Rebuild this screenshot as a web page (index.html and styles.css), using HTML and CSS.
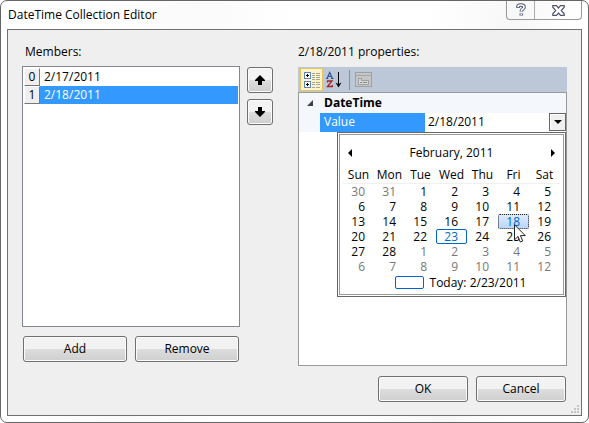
FILE: index.html
```html
<!DOCTYPE html>
<html lang="en">
<head>
<meta charset="utf-8">
<title>DateTime Collection Editor</title>
<link rel="stylesheet" href="styles.css">
</head>
<body>
<main class="dialog">
  <header class="titlebar">
    <h1 class="title">DateTime Collection Editor</h1>
    <div class="caption-buttons">
      <button class="caption help" aria-label="Help">
        <svg width="12" height="14" viewBox="0 0 12 14"><path d="M3 5V3.600C3 2.100 4.300 2 6 2s3 .4 3 1.900C9 6 6.300 6 6.300 8.600M6.300 10.500v2" fill="none" stroke="#51556b" stroke-width="3.600"/><path d="M3 4.200V3.600C3 2.100 4.300 2 6 2s3 .4 3 1.900C9 6 6.300 6 6.300 8M6.300 11v1" fill="none" stroke="#fff" stroke-width="1.600"/></svg>
      </button>
      <button class="caption close" aria-label="Close">
        <svg width="13" height="11" viewBox="0 0 13 11"><path d="M.8.700h3.700l2 2.300 2-2.300h3.700v1.500L9.300 5.500l2.900 3.300v1.500H8.500l-2-2.300-2 2.300H.8V8.800l2.900-3.300L.8 2.200z" fill="#fff" stroke="#51556b" stroke-width="1.200"/></svg>
      </button>
    </div>
  </header>
  <div class="client">
    <div class="panels">
      <section class="members">
        <h2 class="label">Members:</h2>
        <ul class="listbox" role="listbox" aria-label="Members">
          <li class="item" role="option" aria-selected="false"><span class="index">0</span><span class="name">2/17/2011</span></li>
          <li class="item selected" role="option" aria-selected="true"><span class="index">1</span><span class="name">2/18/2011</span></li>
        </ul>
        <div class="member-actions">
          <button class="button">Add</button>
          <button class="button">Remove</button>
        </div>
      </section>
      <div class="order">
        <button class="button" aria-label="Move up"><svg width="10" height="10" viewBox="0 0 10 10"><path d="M5 0l5 5v1H7v4H3V6H0V5z"/></svg></button>
        <button class="button" aria-label="Move down"><svg width="10" height="10" viewBox="0 0 10 10"><path d="M5 10l5-5V4H7V0H3v4H0v1z"/></svg></button>
      </div>
      <section class="properties">
        <h2 class="label">2/18/2011 properties:</h2>
        <div class="toolbar">
          <button class="tool active" aria-label="Categorized">
            <svg width="18" height="18" viewBox="0 0 18 18" shape-rendering="crispEdges"><g fill="#fff" stroke="#5f83b5"><rect x="1.500" y="1.500" width="6" height="6" rx="1"/><rect x="1.500" y="10.500" width="6" height="6" rx="1"/></g><path d="M3 4.500h3M4.500 3v3M3 13.500h3M4.500 12v3" stroke="#000"/><path d="M9 2.500h3M9 4.500h3M9 6.500h3M9 8.500h3M9 11.500h3M9 13.500h3M9 16.500h3M13 2.500h4M13 4.500h4M13 6.500h4M13 8.500h4M13 11.500h4M13 13.500h4M13 16.500h4" stroke="#a5a59c"/></svg>
          </button>
          <button class="tool" aria-label="Alphabetical">
            <svg width="18" height="18" viewBox="0 0 18 18"><path d="M1 7.500l2.700-6 2.700 6M2.200 5.500h3M0 7.500h2.300M5 7.500h2.500" fill="none" stroke="#2f5597" stroke-width="1.200"/><path d="M1.500 11.500v-1.500h4.500L1.500 15.500h4.800V14" fill="none" stroke="#a1262b" stroke-width="1.300"/><path d="M12.500 1v13" stroke="#000"/><path d="M9.500 11.500l3 5 3-5-3 1.500z"/></svg>
          </button>
          <span class="separator"></span>
          <button class="tool pages" disabled aria-label="Property pages">
            <svg width="17" height="16" viewBox="0 0 17 16" shape-rendering="crispEdges"><path d="M.5.500h16v14H.5z" fill="#c5c5c5" stroke="#a0a0a0"/><path d="M1 3.500h15" stroke="#a6a6a6"/><path d="M3.500 12.500v-6h3v2h7v4z" fill="#d8d8d8" stroke="#a0a0a0"/><path d="M5 10.500h2M8 10.500h4" stroke="#888"/></svg>
          </button>
        </div>
        <div class="grid">
          <div class="category"><svg class="expander" width="6" height="6" viewBox="0 0 6 6"><path d="M6 0v6H0z" fill="#404040"/></svg><strong>DateTime</strong></div>
          <div class="property">
            <label class="property-name" for="value">Value</label>
            <input class="property-value" id="value" type="text" value="2/18/2011">
            <button class="dropdown" aria-label="Open calendar"><svg width="8" height="4" viewBox="0 0 8 4"><path d="M0 0h8L4 4z"/></svg></button>
            <div class="calendar">
              <div class="month">
                <button class="nav" aria-label="Previous month"><svg width="4" height="8" viewBox="0 0 4 8"><path d="M4 0v8L0 4z"/></svg></button>
                <span>February, 2011</span>
                <button class="nav" aria-label="Next month"><svg width="4" height="8" viewBox="0 0 4 8"><path d="M0 0v8l4-4z"/></svg></button>
              </div>
              <table class="days">
                <thead><tr><th>Sun</th><th>Mon</th><th>Tue</th><th>Wed</th><th>Thu</th><th>Fri</th><th>Sat</th></tr></thead>
                <tbody>
                  <tr><td class="other">30</td><td class="other">31</td><td>1</td><td>2</td><td>3</td><td>4</td><td>5</td></tr>
                  <tr><td>6</td><td>7</td><td>8</td><td>9</td><td>10</td><td>11</td><td>12</td></tr>
                  <tr><td>13</td><td>14</td><td>15</td><td>16</td><td>17</td><td class="chosen"><span class="mark">18</span><svg class="pointer" width="12" height="19" viewBox="0 0 12 19"><path d="M.5.800v15l3.500-3.300 2.300 5.500 2.500-1-2.400-5.400h4.900z" fill="#fff" stroke="#222"/></svg></td><td>19</td></tr>
                  <tr><td>20</td><td>21</td><td>22</td><td class="today"><span class="mark">23</span></td><td>24</td><td>25</td><td>26</td></tr>
                  <tr><td>27</td><td>28</td><td class="other">1</td><td class="other">2</td><td class="other">3</td><td class="other">4</td><td class="other">5</td></tr>
                  <tr><td class="other">6</td><td class="other">7</td><td class="other">8</td><td class="other">9</td><td class="other">10</td><td class="other">11</td><td class="other">12</td></tr>
                </tbody>
              </table>
              <button class="go-today"><span class="today-box"></span>Today: 2/23/2011</button>
            </div>
          </div>
        </div>
      </section>
    </div>
    <footer class="footer">
      <button class="button">OK</button>
      <button class="button">Cancel</button>
    </footer>
    <svg class="grip" width="8" height="8" viewBox="0 0 8 8" shape-rendering="crispEdges"><path d="M6 0h2v2H6zM3 3h2v2H3zM6 3h2v2H6zM0 6h2v2H0zM3 6h2v2H3zM6 6h2v2H6z" fill="#c4c4c4"/></svg>
  </div>
</main>
</body>
</html>
```

FILE: styles.css
```css
* { box-sizing: border-box; }

body {
  margin: 0;
  background: #fff;
  color: #000;
  font: 12px/18px "Open Sans", "Noto Sans", sans-serif;
}

button, input { font: inherit; color: inherit; padding: 0; margin: 0; }
svg { display: block; }

.dialog {
  min-height: 100vh;
  display: flex;
  flex-direction: column;
  padding: 0 6px 6px;
  border: 1px solid #666;
  border-radius: 7px;
  background: linear-gradient(100deg, #fff 0 15%, #fafafa 30%, #fff 45%, #fff 65%, #f7f7f7 78%, #fff 88%);
}

.titlebar {
  height: 28px;
  display: flex;
  justify-content: space-between;
}

.title {
  margin: 0;
  padding: 5px 1px;
  font-size: 12px;
  font-weight: 400;
}

.caption-buttons {
  height: 19px;
  display: flex;
  border: 1px solid #999;
  border-top: 0;
  border-radius: 0 0 4px 4px;
}

.caption {
  display: grid;
  place-items: center;
  border: 0;
  background: transparent;
}
.help { width: 28px; border-right: 1px solid #aaa; }
.close { width: 46px; }

.client {
  position: relative;
  flex: 1;
  display: flex;
  flex-direction: column;
  padding: 14px;
  padding-bottom: 13px;
  border: 1px solid #707070;
  background: #efefef;
}

.panels {
  flex: 1;
  display: grid;
  grid-template-columns: minmax(0, 218fr) 33px minmax(0, 294fr);
}

.members, .properties { display: flex; flex-direction: column; }

.label {
  height: 22px;
  margin: 0;
  padding-left: 3px;
  font-size: 12px;
  line-height: 16px;
  font-weight: 400;
}
.properties .label { height: 23px; padding: 0; }

.listbox {
  flex: 1;
  margin: 0;
  padding: 1px;
  border: 1px solid #828790;
  background: #fff;
  list-style: none;
}

.item { display: flex; height: 18px; }
.index {
  width: 16px;
  border: 1px solid #fff;
  border-right-color: #777;
  border-bottom-color: #777;
  background: #efefef;
  line-height: 16px;
  text-align: center;
}
.name { flex: 1; padding-left: 4px; }
.selected .name { background: #39f; color: #fff; }

.member-actions {
  display: flex;
  gap: 8px;
  padding: 9px 1px 4px;
}
.member-actions .button { flex: 1; }

.button {
  height: 26px;
  display: grid;
  place-items: center;
  border: 1px solid #707070;
  border-radius: 3px;
  background: linear-gradient(#f2f2f2 0 48%, #ddd 50%, #cfcfcf);
  box-shadow: inset 0 0 0 1px #fbfbfb;
}

.order {
  display: flex;
  flex-direction: column;
  gap: 6px;
  padding: 23px 0 0 7px;
}

.properties { padding-left: 25px; }

.toolbar {
  height: 25px;
  display: flex;
  align-items: center;
  padding-left: 2px;
  background: #bcc7d8;
}
.tool {
  width: 23px;
  height: 23px;
  display: grid;
  place-items: center;
  border: 1px solid transparent;
  background: transparent;
}
.active { border-color: #e5c365; background: #fff3c8; }
.separator {
  width: 1px;
  height: 20px;
  margin: 0 2px 0 3px;
  background: #8591a2;
}

.grid {
  flex: 1;
  border: 1px solid #999;
  background: #fff;
}
.category {
  height: 20px;
  display: flex;
  align-items: center;
  background: #f4f7fc;
}
.expander { margin: 0 11px 0 8px; }
.property {
  position: relative;
  height: 19px;
  display: grid;
  grid-template-columns: minmax(0, 105fr) minmax(0, 124fr) 17px;
  padding-left: 21px;
  background: linear-gradient(to right, #f4f7fc 21px, #fff 21px);
}
.property-name {
  padding-left: 4px;
  background: #39f;
  color: #fff;
}
.property-value {
  width: 100%;
  height: 18px;
  padding-left: 3px;
  border: 0;
  outline: 0;
  background: #fff;
}
.dropdown {
  height: 18px;
  display: grid;
  place-items: center;
  border: 1px solid #666;
  background: #f0f0f0;
  box-shadow: inset 1px 1px #fff;
}

.calendar {
  position: absolute;
  z-index: 1;
  top: 19px;
  right: 0;
  width: 229px;
  padding: 11px 5px 4px;
  border: 1px solid #666;
  background: #fff;
  box-shadow: inset 0 0 0 1px #fff, inset 0 0 0 2px #999;
}
.month {
  display: flex;
  justify-content: space-between;
  align-items: center;
  padding: 0 4px;
}
.nav {
  width: 6px;
  height: 16px;
  display: grid;
  place-items: center;
  border: 0;
  background: transparent;
}

.days {
  width: 217px;
  margin-top: 5px;
  table-layout: fixed;
  border-collapse: collapse;
  line-height: 15px;
}
.days th {
  height: 16px;
  padding: 0;
  border-bottom: 1px solid #f0f0f0;
  font-weight: 400;
  text-align: center;
}
.days td {
  position: relative;
  height: 15px;
  padding: 0 9px 0 0;
  text-align: right;
}
.days .other { color: #777; }
.mark {
  display: block;
  margin-right: -9px;
  padding-right: 8px;
  border: 1px solid #06c;
  border-radius: 2px;
  color: #06c;
  line-height: 13px;
}
.chosen .mark {
  border: 1px dotted #222;
  background: linear-gradient(#dcebfc, #b9d6fb);
}
.pointer {
  position: absolute;
  z-index: 2;
  top: 10px;
  left: 16px;
}

.go-today {
  display: flex;
  align-items: center;
  gap: 6px;
  height: 18px;
  margin: 0 auto;
  padding-left: 18px;
  border: 0;
  background: transparent;
}
.today-box {
  width: 29px;
  height: 13px;
  border: 1px solid #06c;
  border-radius: 2px;
}

.footer {
  display: flex;
  justify-content: flex-end;
  gap: 8px;
  padding: 10px 1px 0;
}
.footer .button { width: 90px; }

.grip {
  position: absolute;
  right: 2px;
  bottom: 2px;
}
```
